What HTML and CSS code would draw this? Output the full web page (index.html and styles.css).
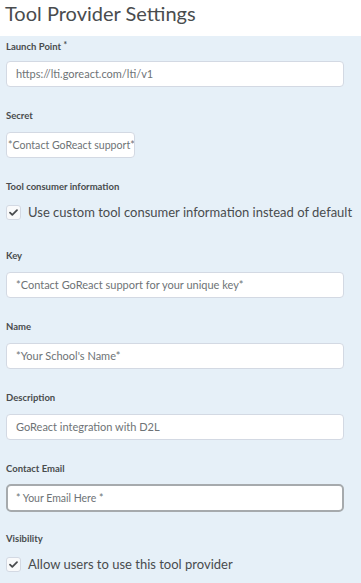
FILE: index.html
```html
<!DOCTYPE html>
<html>
<head>
<meta charset="utf-8">
<link rel="stylesheet" href="styles.css">
</head>
<body>
<header class="page-head"><h1 class="title">Tool Provider Settings</h1></header>
<main class="form">
  <div class="field">
    <div class="label">Launch Point <span class="req">*</span></div>
    <div class="input">https://lti.goreact.com/lti/v1</div>
  </div>
  <div class="field">
    <div class="label">Secret</div>
    <div class="input input-short">*Contact GoReact support*</div>
  </div>
  <div class="field field-check">
    <div class="label">Tool consumer information</div>
    <label class="check-row"><span class="box"><svg viewBox="0 0 15 15" width="15" height="15"><path d="M4 7.6 L6.3 9.9 L11 5.2" fill="none" stroke="#494c4e" stroke-width="1.8" stroke-linecap="round" stroke-linejoin="round"/></svg></span><span class="check-text">Use custom tool consumer information instead of default</span></label>
  </div>
  <div class="field">
    <div class="label">Key</div>
    <div class="input">*Contact GoReact support for your unique key*</div>
  </div>
  <div class="field">
    <div class="label">Name</div>
    <div class="input">*Your School's Name*</div>
  </div>
  <div class="field">
    <div class="label">Description</div>
    <div class="input">GoReact integration with D2L</div>
  </div>
  <div class="field field-email">
    <div class="label label-email">Contact Email</div>
    <div class="input input-email">* Your Email Here *</div>
  </div>
  <div class="field field-check field-last">
    <div class="label">Visibility</div>
    <label class="check-row"><span class="box"><svg viewBox="0 0 15 15" width="15" height="15"><path d="M4 7.6 L6.3 9.9 L11 5.2" fill="none" stroke="#494c4e" stroke-width="1.8" stroke-linecap="round" stroke-linejoin="round"/></svg></span><span class="check-text">Allow users to use this tool provider</span></label>
  </div>
</main>
</body>
</html>
```

FILE: styles.css
```css
html, body {
  margin: 0;
  padding: 0;
  background: #e6f0f8;
  font-family: Lato, "Open Sans", sans-serif;
  color: #494c4e;
}
.page-head {
  background: #ffffff;
  height: 36px;
  padding-left: 5px;
  box-sizing: border-box;
}
.title {
  margin: 0;
  font-weight: 400;
  font-size: 20px;
  line-height: 27px;
  color: #494c4e;
}
.form {
  padding: 3px 0 0 6px;
}
.field {
  margin-bottom: 23px;
}
.field-check {
  margin-bottom: 29px;
}
.field-last {
  margin-bottom: 0;
}
.label {
  font-size: 9.5px;
  font-weight: 700;
  line-height: 12px;
  height: 12px;
  margin-bottom: 10px;
  color: #494c4e;
}
.label-email {
  margin-bottom: 9px;
}
.req {
  font-size: 8.5px;
  vertical-align: 2px;
}
.input {
  box-sizing: border-box;
  width: 338px;
  height: 26px;
  background: #ffffff;
  border: 1px solid #d3d9e3;
  border-radius: 4px;
  padding: 0 9px;
  font-size: 11px;
  line-height: 24px;
  color: #6e7376;
  white-space: nowrap;
  overflow: hidden;
}
.input-short {
  width: 129px;
  padding: 0 0 0 1px;
  font-size: 10.6px;
}
.field-email {
  margin-bottom: 21px;
}
.input-email {
  height: 28px;
  border: 2px solid #a6aaad;
  border-radius: 5px;
  line-height: 24px;
  padding: 0 8px;
  font-size: 10.5px;
}
.check-row {
  display: flex;
  align-items: center;
  gap: 7px;
  margin-top: 9px;
  height: 18px;
}
.box {
  box-sizing: border-box;
  width: 15px;
  height: 15px;
  border: 1px solid #d3d9e3;
  border-radius: 3px;
  background: #f9fafb;
  display: flex;
  align-items: center;
  justify-content: center;
  flex: none;
}
.box svg {
  display: block;
  margin: -1px;
}
.check-text {
  font-size: 13px;
  color: #494c4e;
  white-space: nowrap;
}
```
